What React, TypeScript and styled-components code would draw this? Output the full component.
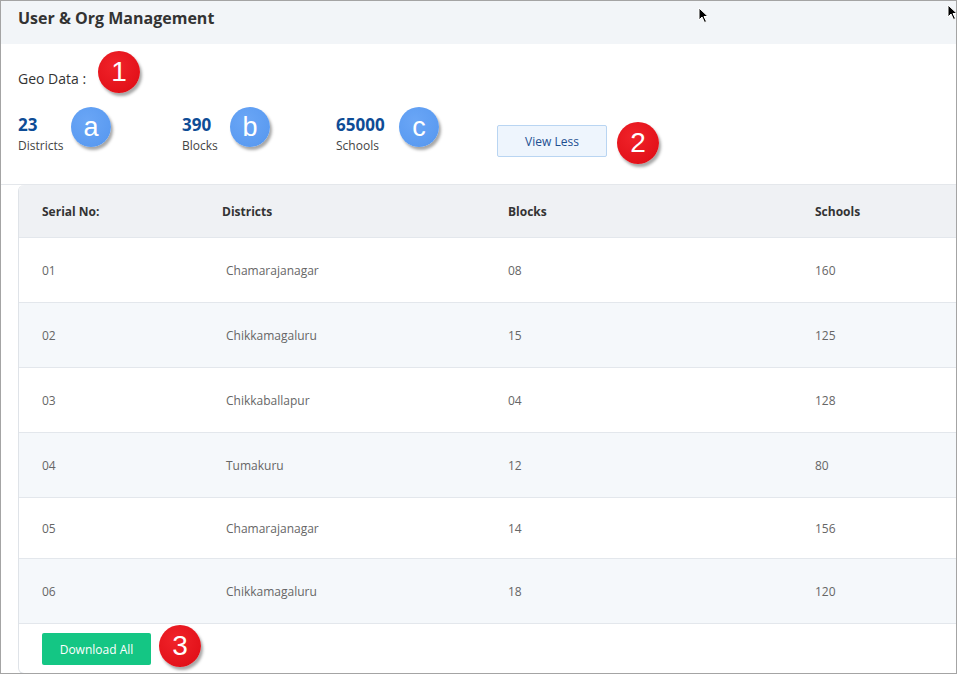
import React from "react";
import styled, { createGlobalStyle } from "styled-components";

const GlobalStyle = createGlobalStyle`
  html, body {
    margin: 0;
    padding: 0;
    background: #ffffff;
  }
  body {
    font-family: "Open Sans", "Noto Sans", sans-serif;
    color: #333;
  }
`;

const Frame = styled.div`
  position: relative;
  width: 957px;
  height: 674px;
  box-sizing: border-box;
  border: 1px solid #a4a4a4;
  overflow: hidden;
  background: #fff;
`;

const TopBar = styled.div`
  height: 43px;
  background: #f2f5f8;
  display: flex;
  align-items: center;
  padding-left: 17px;
  padding-bottom: 9px;
  box-sizing: border-box;
`;

const Title = styled.h1`
  margin: 0;
  font-size: 16px;
  font-weight: 700;
  color: #333;
`;

const Summary = styled.section`
  height: 141px;
  box-sizing: border-box;
  padding: 7px 17px 0;
  border-bottom: 1px solid #e4e7eb;
`;

const GeoRow = styled.div`
  display: flex;
  align-items: center;
  gap: 12px;
  height: 42px;
`;

const GeoLabel = styled.span`
  font-size: 14px;
  color: #333;
  padding-top: 12px;
`;

const StatsRow = styled.div`
  display: flex;
  align-items: flex-start;
  margin-top: 22px;
`;

const Stat = styled.div<{ $w: number }>`
  position: relative;
  width: ${(p) => p.$w}px;
  display: flex;
  flex-direction: column;
`;

const StatValue = styled.span`
  font-size: 17px;
  line-height: 20px;
  font-weight: 700;
  color: #0e4c96;
`;

const StatLabel = styled.span`
  margin-top: 3px;
  font-size: 12px;
  line-height: 15px;
  color: #444;
`;

const Badge = styled.span<{ $tone: "red" | "blue"; $size?: number }>`
  width: ${(p) => p.$size ?? 42}px;
  height: ${(p) => p.$size ?? 42}px;
  flex: none;
  border-radius: 50%;
  display: inline-flex;
  align-items: center;
  justify-content: center;
  font-family: "Liberation Sans", Arial, sans-serif;
  font-size: 28px;
  line-height: 1;
  color: #fff;
  background: ${(p) =>
    p.$tone === "red"
      ? "radial-gradient(circle at 40% 35%, #f0232a 0%, #e3121a 70%, #cf0c14 100%)"
      : "radial-gradient(circle at 40% 35%, #6aa6f6 0%, #5b9bf1 70%, #4f8fe6 100%)"};
  box-shadow: 2px 3px 3px rgba(0, 0, 0, 0.35);
`;

const StatBadge = styled(Badge)<{ $left: number }>`
  position: absolute;
  left: ${(p) => p.$left}px;
  top: -8px;
  font-size: 27px;
`;

const ViewLess = styled.button`
  margin-top: 10px;
  width: 110px;
  height: 32px;
  border: 1px solid #b9d5f2;
  border-radius: 2px;
  background: #eef5fd;
  color: #1d4f91;
  font-family: "Open Sans", sans-serif;
  font-size: 12px;
`;

const ButtonGroup = styled.div`
  display: flex;
  align-items: flex-start;
  gap: 10px;
`;

const ButtonBadge = styled(Badge)`
  margin-top: 7px;
`;

const Card = styled.div`
  margin-left: 17px;
  width: 980px;
  border: 1px solid #dfe3e8;
  border-top: none;
  border-radius: 6px;
  overflow: hidden;
  background: #fff;
`;

const Row = styled.div<{ $variant: "head" | "odd" | "even"; $h?: number }>`
  display: grid;
  grid-template-columns: 180px 286px 307px 1fr;
  align-items: center;
  padding-left: 23px;
  height: ${(p) => p.$h ?? (p.$variant === "head" ? 52 : 64)}px;
  border-bottom: 1px solid #e3e7ec;
  background: ${(p) =>
    p.$variant === "head" ? "#eff1f4" : p.$variant === "even" ? "#f5f8fb" : "#fff"};
`;

const HeadCell = styled.span`
  font-size: 12px;
  font-weight: 700;
  color: #333;
`;

const Cell = styled.span<{ $indent?: number }>`
  font-size: 12px;
  color: #666;
  padding-left: ${(p) => p.$indent ?? 0}px;
`;

const Footer = styled.div`
  display: flex;
  align-items: center;
  gap: 8px;
  padding: 7px 23px 6px;
`;

const Download = styled.button`
  width: 109px;
  height: 32px;
  border: none;
  border-radius: 2px;
  background: #14c684;
  color: #fff;
  font-family: "Open Sans", sans-serif;
  font-size: 12px;
`;

const FooterBadge = styled(Badge)`
  margin-top: -6px;
`;

const Pointer = styled.svg<{ $x: number; $y: number }>`
  position: absolute;
  left: ${(p) => p.$x}px;
  top: ${(p) => p.$y}px;
`;

const rows: { cells: string[]; h?: number }[] = [
  { cells: ["01", "Chamarajanagar", "08", "160"] },
  { cells: ["02", "Chikkamagaluru", "15", "125"] },
  { cells: ["03", "Chikkaballapur", "04", "128"] },
  { cells: ["04", "Tumakuru", "12", "80"] },
  { cells: ["05", "Chamarajanagar", "14", "156"], h: 60 },
  { cells: ["06", "Chikkamagaluru", "18", "120"] },
];

const Cursor = ({ x, y }: { x: number; y: number }) => (
  <Pointer $x={x} $y={y} width="12" height="17" viewBox="0 0 12 17">
    <path d="M1 1 L1 13 L4 10 L6.5 15.5 L8.5 14.5 L6 9.5 L10 9.5 Z" fill="#000" stroke="#fff" strokeWidth="1" />
  </Pointer>
);

const App = () => {
  return (
    <>
      <GlobalStyle />
      <Frame>
        <TopBar>
          <Title>User &amp; Org Management</Title>
        </TopBar>
        <Summary>
          <GeoRow>
            <GeoLabel>Geo Data :</GeoLabel>
            <Badge $tone="red">1</Badge>
          </GeoRow>
          <StatsRow>
            <Stat $w={164}>
              <StatValue>23</StatValue>
              <StatLabel>Districts</StatLabel>
              <StatBadge $tone="blue" $size={40} $left={53}>a</StatBadge>
            </Stat>
            <Stat $w={154}>
              <StatValue>390</StatValue>
              <StatLabel>Blocks</StatLabel>
              <StatBadge $tone="blue" $size={40} $left={48}>b</StatBadge>
            </Stat>
            <Stat $w={161}>
              <StatValue>65000</StatValue>
              <StatLabel>Schools</StatLabel>
              <StatBadge $tone="blue" $size={40} $left={63}>c</StatBadge>
            </Stat>
            <ButtonGroup>
              <ViewLess>View Less</ViewLess>
              <ButtonBadge $tone="red">2</ButtonBadge>
            </ButtonGroup>
          </StatsRow>
        </Summary>
        <Card>
          <Row $variant="head">
            <HeadCell>Serial No:</HeadCell>
            <HeadCell>Districts</HeadCell>
            <HeadCell>Blocks</HeadCell>
            <HeadCell>Schools</HeadCell>
          </Row>
          {rows.map((r, i) => (
            <Row key={r.cells[0]} $variant={i % 2 === 0 ? "odd" : "even"} $h={r.h}>
              <Cell>{r.cells[0]}</Cell>
              <Cell $indent={4}>{r.cells[1]}</Cell>
              <Cell>{r.cells[2]}</Cell>
              <Cell>{r.cells[3]}</Cell>
            </Row>
          ))}
          <Footer>
            <Download>Download All</Download>
            <FooterBadge $tone="red">3</FooterBadge>
          </Footer>
        </Card>
        <Cursor x={697} y={6} />
        <Cursor x={946} y={3} />
      </Frame>
    </>
  );
};

export default App;
